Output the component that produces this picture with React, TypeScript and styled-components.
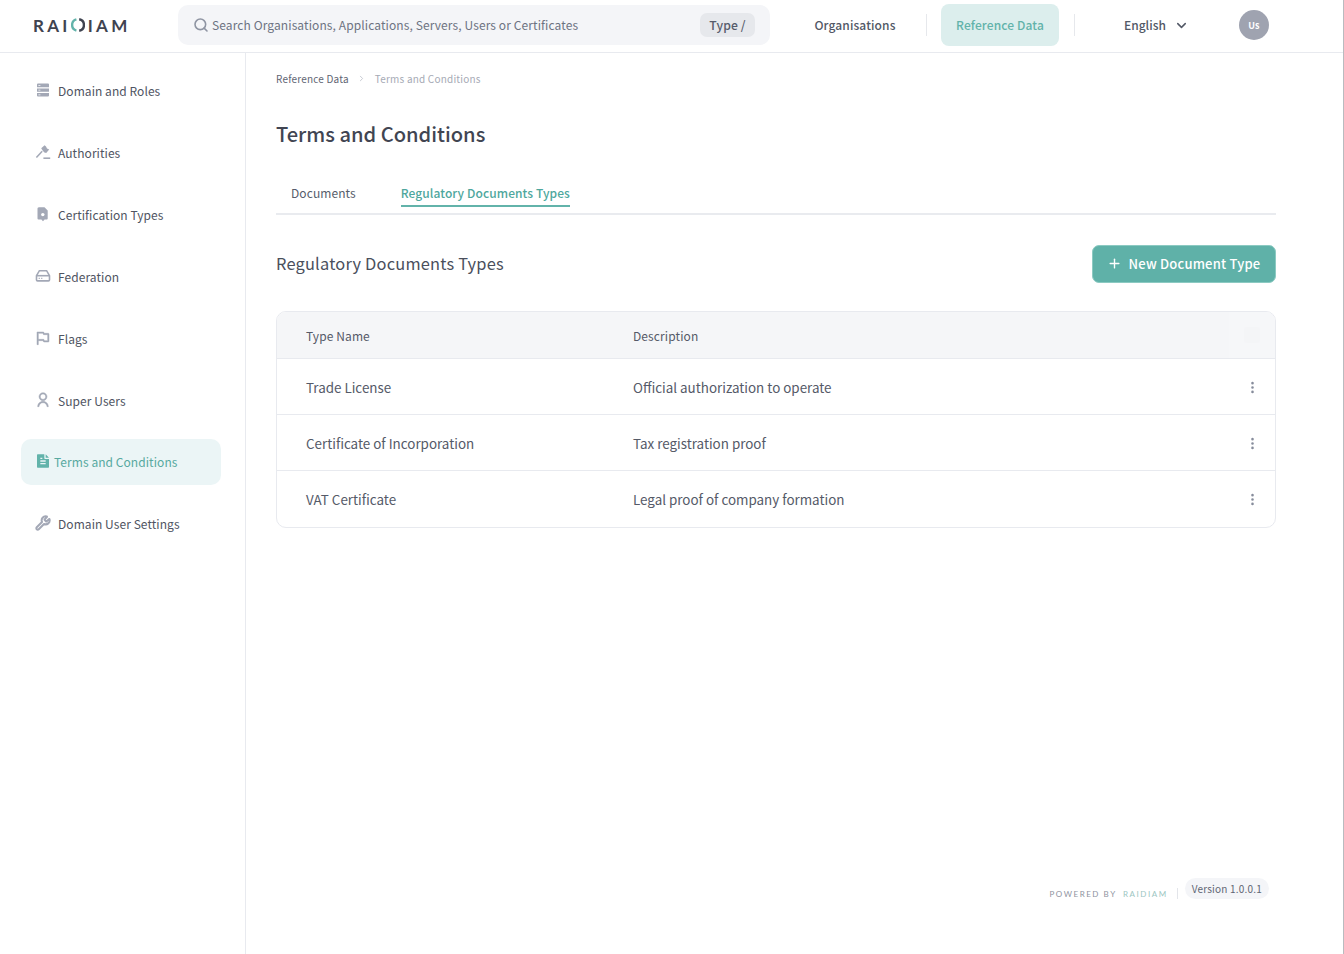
import React from 'react';
import styled, { createGlobalStyle } from 'styled-components';
import { Search, ChevronDown, ChevronRight, Plus, MoreVertical, Wrench } from 'lucide-react';
import { RiFlagLine, RiUserLine, RiFileTextFill } from 'react-icons/ri';

const GlobalStyle = createGlobalStyle`
  html, body { margin: 0; padding: 0; background: #fff; }
  body { font-family: "Noto Sans CJK SC", "Noto Sans", sans-serif; color: #4a4f5c; }
  * { box-sizing: border-box; }
`;

const Page = styled.div`
  width: 1344px;
  height: 954px;
  display: flex;
  flex-direction: column;
  border-right: 1px solid #b9bbbf;
  overflow: hidden;
`;

const Header = styled.header`
  height: 53px;
  flex: none;
  display: flex;
  align-items: center;
  border-bottom: 1px solid #e8eaef;
  padding: 0 0 2px 33px;
`;

const Logo = styled.div`
  width: 145px;
  flex: none;
  display: flex;
  align-items: center;
  font-family: "Lato", sans-serif;
  font-weight: 700;
  font-size: 17px;
  letter-spacing: 3.3px;
  color: #3f4350;
  svg { margin: 0 3px 0 0; }
`;

const SearchBox = styled.div`
  width: 592px;
  height: 40px;
  flex: none;
  display: flex;
  align-items: center;
  gap: 3px;
  padding: 0 15px;
  background: #f4f5f8;
  border-radius: 10px;
  font-size: 12px;
  letter-spacing: 0.1px;
  color: #6d7382;
  svg { color: #8f95a3; }
`;

const SearchText = styled.span`
  flex: 1;
  padding-bottom: 2px;
`;

const TypeKey = styled.span`
  width: 55px;
  height: 24px;
  padding-bottom: 1px;
  display: flex;
  align-items: center;
  justify-content: center;
  background: #e6e8ec;
  border-radius: 7px;
  font-size: 12.2px;
  font-weight: 500;
  color: #565c6b;
`;

const TopLink = styled.div<{ $active?: boolean }>`
  height: ${p => (p.$active ? '42px' : '40px')};
  padding-bottom: 2px;
  display: flex;
  align-items: center;
  justify-content: center;
  font-size: 12px;
  font-weight: 500;
  letter-spacing: 0.12px;
  border-radius: 8px;
  color: ${p => (p.$active ? '#62b3aa' : '#525866')};
  background: ${p => (p.$active ? '#dceeed' : 'transparent')};
`;

const OrgLink = styled(TopLink)`
  width: 112px;
  margin-left: 29px;
`;

const RefLink = styled(TopLink)`
  width: 118px;
  margin-left: 14px;
`;

const TopDivider = styled.span`
  width: 1px;
  height: 22px;
  background: #e6e8ec;
  margin-left: 15px;
`;

const LangSelect = styled.div`
  display: flex;
  align-items: center;
  gap: 8px;
  margin-left: 49px;
  font-size: 12px;
  font-weight: 500;
  color: #525866;
`;

const LangLabel = styled.span`
  padding-bottom: 2px;
`;

const Avatar = styled.div`
  width: 30px;
  height: 30px;
  margin-left: 50px;
  border-radius: 50%;
  background: #9fa3b0;
  color: #fff;
  font-size: 9px;
  font-weight: 700;
  display: flex;
  align-items: center;
  justify-content: center;
`;

const Body = styled.div`
  flex: 1;
  display: flex;
  min-height: 0;
`;

const Sidebar = styled.nav`
  width: 246px;
  flex: none;
  border-right: 1px solid #e8eaef;
  padding: 14px 24px 0 21px;
  display: flex;
  flex-direction: column;
  gap: 16px;
`;

const NavItem = styled.div<{ $active?: boolean }>`
  height: 46px;
  flex: none;
  display: flex;
  align-items: center;
  gap: ${p => (p.$active ? '3px' : '7px')};
  padding: 0 0 ${p => (p.$active ? '2px' : '0')} 14px;
  margin-bottom: ${p => (p.$active ? '-1px' : '0')};
  border-radius: 10px;
  font-size: 12px;
  letter-spacing: 0.06px;
  color: ${p => (p.$active ? '#57a9a0' : '#4f5462')};
  background: ${p => (p.$active ? '#ebf5f6' : 'transparent')};
  svg { flex: none; width: 16px; height: 16px; color: ${p => (p.$active ? '#62b3aa' : '#a3a8b6')}; }
`;

const Main = styled.main`
  flex: 1;
  padding: 18px 67px 0 30px;
  display: flex;
  flex-direction: column;
  position: relative;
`;

const Breadcrumb = styled.div`
  height: 14px;
  display: flex;
  align-items: center;
  gap: 8.5px;
  font-size: 10px;
  letter-spacing: 0.2px;
  color: #5f6573;
  svg { color: #b5b9c4; }
`;

const CrumbCurrent = styled.span`
  color: #a6aab5;
`;

const Title = styled.h1`
  margin: 34px 0 0;
  font-size: 20.1px;
  line-height: 30px;
  font-weight: 500;
  color: #414552;
`;

const Tabs = styled.div`
  margin-top: 28px;
  height: 38px;
  display: flex;
  border-bottom: 2px solid #e9ebef;
  padding-left: 15px;
  gap: 45px;
`;

const Tab = styled.div<{ $active?: boolean }>`
  height: 30px;
  display: flex;
  align-items: center;
  padding-top: 3px;
  font-size: 12px;
  letter-spacing: 0.08px;
  font-weight: ${p => (p.$active ? 500 : 400)};
  color: ${p => (p.$active ? '#4ea79d' : '#575d6b')};
  border-bottom: ${p => (p.$active ? '2px solid #62b3aa' : '2px solid transparent')};
`;

const SectionRow = styled.div`
  margin-top: 30px;
  height: 38px;
  display: flex;
  align-items: center;
  justify-content: space-between;
`;

const SectionTitle = styled.h2`
  margin: 0;
  padding-bottom: 2px;
  font-size: 16.4px;
  font-weight: 400;
  letter-spacing: 0.2px;
  color: #4a4f5c;
`;

const PrimaryButton = styled.button`
  width: 184px;
  height: 38px;
  padding: 0 1px 2px 0;
  border: 1px solid #8ccac2;
  border-radius: 7px;
  background: #5fb1a8;
  color: #fff;
  font: inherit;
  font-size: 13px;
  font-weight: 500;
  letter-spacing: 0.2px;
  white-space: nowrap;
  display: flex;
  align-items: center;
  justify-content: center;
  gap: 7px;
`;

const Table = styled.div`
  margin-top: 28px;
  width: 1000px;
  border: 1px solid #e8eaef;
  border-radius: 10px;
  overflow: hidden;
`;

const Row = styled.div`
  display: grid;
  grid-template-columns: 327px 1fr 46px;
  align-items: center;
  padding-left: 29px;
  height: 56px;
  font-size: 13.4px;
  color: #555a68;
  border-bottom: 1px solid #e8eaef;
  &:last-child { border-bottom: 0; }
`;

const HeadRow = styled(Row)`
  height: 47px;
  background: #f5f6f8;
  font-size: 12px;
  letter-spacing: 0.1px;
`;

const HeadAction = styled.div`
  height: 46px;
  display: flex;
  align-items: center;
  justify-content: center;
  background: #f6f7f9;
  &::after {
    content: '';
    width: 16px;
    height: 16px;
    border-radius: 3px;
    background: #f4f5f7;
  }
`;

const RowMenu = styled.div`
  display: flex;
  justify-content: center;
  padding-top: 1px;
  color: #868c9b;
`;

const Footer = styled.div`
  position: absolute;
  right: 74px;
  bottom: 55px;
  display: flex;
  align-items: center;
  font-family: "Lato", sans-serif;
`;

const Powered = styled.span`
  font-size: 8px;
  letter-spacing: 1.55px;
  color: #8e93a0;
  margin-top: 10px;
  b { font-weight: 400; color: #9cc6c2; margin-left: 3px; }
`;

const FooterDivider = styled.span`
  width: 1px;
  height: 11px;
  margin: 9px 7px 0 9px;
  background: #e3e5ea;
`;

const VersionPill = styled.span`
  height: 21px;
  padding: 0 7px;
  display: flex;
  align-items: center;
  border-radius: 11px;
  background: #f4f5f8;
  font-family: "Noto Sans CJK SC", sans-serif;
  font-size: 10px;
  letter-spacing: 0.2px;
  color: #5f6573;
`;

const LogoMark = () => (
  <svg width="14" height="14" viewBox="0 0 14 14" fill="none" strokeWidth="2.4">
    <path d="M8.2 1.3A5.8 5.8 0 0 1 8.2 12.7" stroke="#3f4350" />
    <path d="M5.4 1.4A5.8 5.8 0 0 0 5.4 12.6" stroke="#62b3aa" />
  </svg>
);

const StackIcon = () => (
  <svg viewBox="0 0 16 16" fill="currentColor">
    <path d="M2 2.6a1 1 0 0 1 1-1h10a1 1 0 0 1 1 1v2.6H2zM2 6.4h12v3.4H2zM2 11h12v2.6a1 1 0 0 1-1 1H3a1 1 0 0 1-1-1z" />
    <path d="M3.4 3.1h2v.7h-2zM3.4 7.8h2v.7h-2zM3.4 12.5h2v.7h-2z" fill="#fff" />
  </svg>
);

const GavelIcon = () => (
  <svg viewBox="0 0 16 16" fill="currentColor">
    <path d="M6.2 4.3 9.6 1.2l1.4 1.2 1 2 2.2 1-3 3.5-1.8-.5-1.6-1.6z" />
    <path d="M7.2 7.2 1.4 13.6" stroke="currentColor" strokeWidth="1.5" fill="none" />
    <path d="M8.4 13.4h6.8V15H8.4z" />
  </svg>
);

const CertificateIcon = () => (
  <svg viewBox="0 0 16 16" fill="currentColor">
    <path d="M3.5 1.2h6l3.2 3.2v8a1 1 0 0 1-1 1H9.6L8 15.2l-1.6-1.8H3.5a1 1 0 0 1-1-1v-10a1 1 0 0 1 1-1z" />
    <circle cx="7.8" cy="8.6" r="1.7" fill="#fff" />
  </svg>
);

const DriveIcon = () => (
  <svg viewBox="0 0 16 16" fill="none" stroke="currentColor" strokeWidth="1.6">
    <path d="M4.4 2.7h7.2l2.9 5v4.2a1 1 0 0 1-1 1H2.5a1 1 0 0 1-1-1V7.7z" />
    <path d="M1.6 7.7h12.8" />
    <path d="M3.6 10.3h1.4M6 10.3h1.4" strokeWidth="1" />
  </svg>
);

const navItems = [
  { label: 'Domain and Roles', icon: <StackIcon /> },
  { label: 'Authorities', icon: <GavelIcon /> },
  { label: 'Certification Types', icon: <CertificateIcon /> },
  { label: 'Federation', icon: <DriveIcon /> },
  { label: 'Flags', icon: <RiFlagLine stroke="currentColor" strokeWidth={0.7} /> },
  { label: 'Super Users', icon: <RiUserLine stroke="currentColor" strokeWidth={0.7} /> },
  { label: 'Terms and Conditions', icon: <RiFileTextFill />, active: true },
  { label: 'Domain User Settings', icon: <Wrench strokeWidth={3} /> },
];

const rows = [
  { name: 'Trade License', description: 'Official authorization to operate' },
  { name: 'Certificate of Incorporation', description: 'Tax registration proof' },
  { name: 'VAT Certificate', description: 'Legal proof of company formation' },
];

export default function App() {
  return (
    <Page>
      <GlobalStyle />
      <Header>
        <Logo>RAI<LogoMark />IAM</Logo>
        <SearchBox>
          <Search size={16} strokeWidth={2.4} />
          <SearchText>Search Organisations, Applications, Servers, Users or Certificates</SearchText>
          <TypeKey>Type /</TypeKey>
        </SearchBox>
        <OrgLink>Organisations</OrgLink>
        <TopDivider />
        <RefLink $active>Reference Data</RefLink>
        <TopDivider />
        <LangSelect><LangLabel>English</LangLabel><ChevronDown size={15} strokeWidth={2.4} /></LangSelect>
        <Avatar>Us</Avatar>
      </Header>
      <Body>
        <Sidebar>
          {navItems.map(item => (
            <NavItem key={item.label} $active={item.active}>
              {item.icon}
              {item.label}
            </NavItem>
          ))}
        </Sidebar>
        <Main>
          <Breadcrumb>
            <span>Reference Data</span>
            <ChevronRight size={9} />
            <CrumbCurrent>Terms and Conditions</CrumbCurrent>
          </Breadcrumb>
          <Title>Terms and Conditions</Title>
          <Tabs>
            <Tab>Documents</Tab>
            <Tab $active>Regulatory Documents Types</Tab>
          </Tabs>
          <SectionRow>
            <SectionTitle>Regulatory Documents Types</SectionTitle>
            <PrimaryButton><Plus size={15} strokeWidth={2.2} />New Document Type</PrimaryButton>
          </SectionRow>
          <Table>
            <HeadRow>
              <span>Type Name</span>
              <span>Description</span>
              <HeadAction />
            </HeadRow>
            {rows.map(row => (
              <Row key={row.name}>
                <span>{row.name}</span>
                <span>{row.description}</span>
                <RowMenu><MoreVertical size={15} strokeWidth={2.2} /></RowMenu>
              </Row>
            ))}
          </Table>
          <Footer>
            <Powered>POWERED BY <b>RAIDIAM</b></Powered>
            <FooterDivider />
            <VersionPill>Version 1.0.0.1</VersionPill>
          </Footer>
        </Main>
      </Body>
    </Page>
  );
}
